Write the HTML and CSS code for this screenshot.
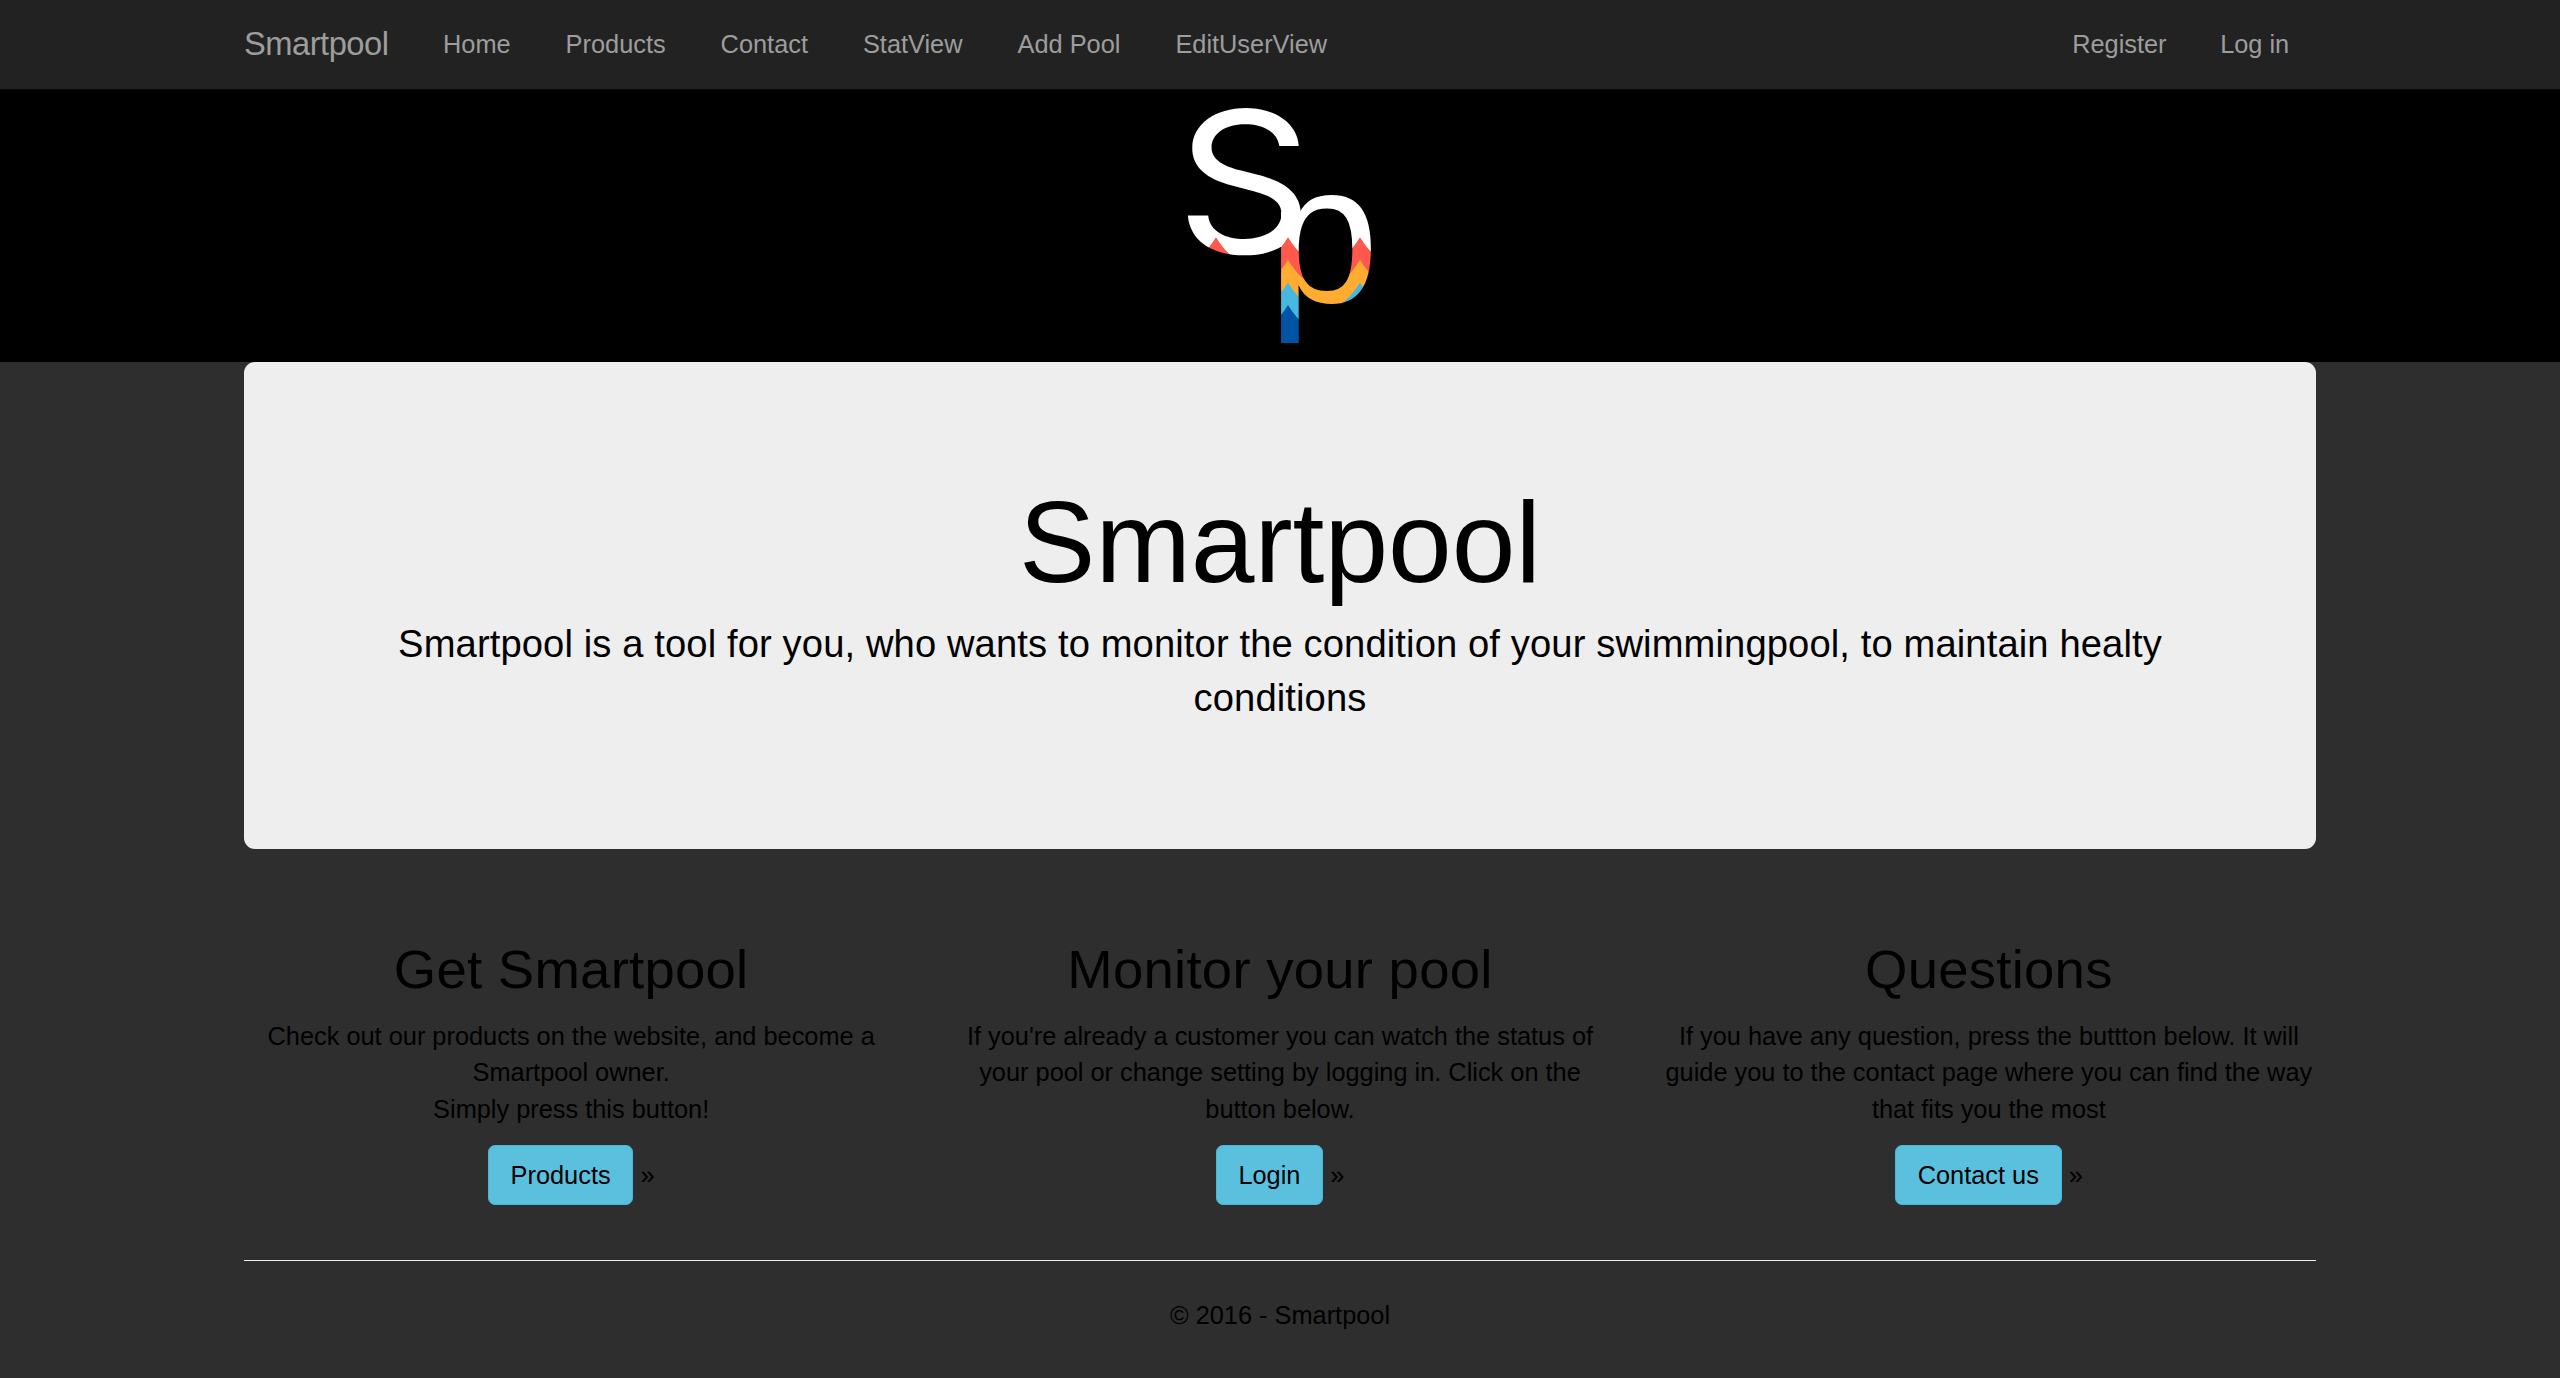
FILE: index.html
```html
<!DOCTYPE html>
<html lang="en">
<head>
<meta charset="utf-8">
<title>Smartpool</title>
<link rel="stylesheet" href="styles.css">
</head>
<body>
<nav class="navbar">
  <div class="container navbar-inner">
    <a class="brand">Smartpool</a>
    <ul class="nav">
      <li>Home</li><li>Products</li><li>Contact</li><li>StatView</li><li>Add Pool</li><li>EditUserView</li>
    </ul>
    <ul class="nav nav-right">
      <li>Register</li><li>Log in</li>
    </ul>
  </div>
</nav>
<header class="banner">
  <svg class="logo" viewBox="0 10 240 272" role="img" aria-label="Smartpool logo">
    <defs>
      <clipPath id="letter-s">
        <text class="logo-s" transform="translate(15.8 173) scale(1.075 .99)">S</text>
      </clipPath>
      <clipPath id="p-area"><path d="M110 132H140V110H230V290H110Z"/></clipPath>
      <clipPath id="letter-p" clip-path="url(#p-area)">
        <text class="logo-p" transform="translate(107.6 221.8) scale(1.01 .995)">p</text>
      </clipPath>
      <path id="wave" d="M-16 28Q4 26 20 28Q40 26 56 0Q72 26 92 28Q112 26 128 0Q144 26 164 28Q184 26 200 0Q216 26 236 28V300H-16Z"/>
      <g id="water">
        <rect width="240" height="290" fill="#fff"/>
        <use href="#wave" y="157.3" fill="#ff584c"/>
        <use href="#wave" y="180" fill="#ffac30"/>
        <use href="#wave" y="202.5" fill="#48b8e0"/>
        <use href="#wave" y="225" fill="#0054a6"/>
      </g>
    </defs>
    <use href="#water" clip-path="url(#letter-s)"/>
    <use href="#water" clip-path="url(#letter-p)"/>
  </svg>
</header>
<main class="container">
  <section class="jumbotron">
    <h1>Smartpool</h1>
    <p>Smartpool is a tool for you, who wants to monitor the condition of your swimmingpool, to maintain healty conditions</p>
  </section>
  <section class="row">
    <div class="col">
      <h2>Get Smartpool</h2>
      <p>Check out our products on the website, and become a Smartpool owner.<br>Simply press this button!</p>
      <p><a class="btn">Products</a> »</p>
    </div>
    <div class="col">
      <h2>Monitor your pool</h2>
      <p>If you're already a customer you can watch the status of your pool or change setting by logging in. Click on the button below.</p>
      <p><a class="btn">Login</a> »</p>
    </div>
    <div class="col">
      <h2>Questions</h2>
      <p>If you have any question, press the buttton below. It will guide you to the contact page where you can find the way that fits you the most</p>
      <p><a class="btn">Contact us</a> »</p>
    </div>
  </section>
  <hr>
  <footer><p>© 2016 - Smartpool</p></footer>
</main>
</body>
</html>
```
FILE: styles.css
```css
* { box-sizing: border-box; }
body {
  margin: 0;
  min-height: 1378px;
  background: #2e2e2e;
  color: #000;
  font: 25.35px/36.36px "Liberation Sans", Arial, sans-serif;
}
.container { width: 2072px; margin: 0 auto; }
.navbar {
  height: 90px;
  background: #222;
  border-bottom: 1px solid #080808;
  color: #9d9d9d;
}
.navbar-inner { display: flex; height: 88px; align-items: center; }
.brand { font-size: 32.7px; letter-spacing: -.5px; margin-right: 27px; }
.nav { display: flex; list-style: none; margin: 0; padding: 0; }
.nav li { padding: 0 27.5px; white-space: nowrap; }
.nav-right { margin-left: auto; }
.nav-right li { padding: 0 26.8px; }
.banner { display: flex; justify-content: center; height: 272px; background: #000; }
.logo { width: 240px; height: 272px; }
.logo-s { font-family: Inter, Arial, sans-serif; font-size: 199px; }
.logo-p { font-family: "Liberation Sans", Arial, sans-serif; font-size: 199px; }
.jumbotron {
  height: 487px;
  padding: 117px 109px 0;
  border-radius: 11px;
  background: #eee;
  text-align: center;
}
h1, h2 { margin: 0; font-weight: 500; }
h1 { font-size: 114.5px; line-height: 126px; }
.jumbotron p { margin: 12px 0 0; font-size: 38.17px; line-height: 54px; letter-spacing: .115px; }
.row {
  display: grid;
  grid-template-columns: repeat(3, 1fr);
  gap: 54.5px;
  padding-top: 91px;
  text-align: center;
}
h2 { font-size: 54.5px; line-height: 60px; letter-spacing: .25px; }
.col p { margin: 18px 0 0; }
.btn {
  display: inline-block;
  padding: 11px 21.8px;
  border: 1px solid #46b8da;
  border-radius: 7px;
  background: #5bc0de;
}
hr { height: 1px; margin: 55px 0 36px; border: 0; background: #eee; }
footer { text-align: center; }
footer p { margin: 0; }
```
